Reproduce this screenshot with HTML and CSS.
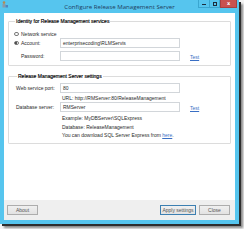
FILE: index.html
```html
<!DOCTYPE html>
<html>
<head>
<meta charset="utf-8">
<link rel="stylesheet" href="styles.css">
</head>
<body>
<div class="win">
  <div class="titlebar">
    <svg class="appicon" width="6" height="7" viewBox="0 0 6 7">
      <rect x="0.5" y="3" width="3" height="3.5" fill="#8a9aa8"/>
      <circle cx="2" cy="1.6" r="1.3" fill="#b58a52"/>
      <rect x="3.5" y="4" width="2.5" height="2.5" fill="#4f86c0"/>
    </svg>
    <div class="title">Configure Release Management Server</div>
    <div class="ctrls">
      <span class="cbtn min"><i></i></span>
      <span class="cbtn max"><i></i></span>
      <span class="cbtn close">x</span>
    </div>
  </div>
  <div class="client">
    <fieldset class="grp g1">
      <legend>Identity for Release Management services</legend>
      <div class="row r-radio"><span class="radio"></span><span>Network service</span></div>
      <div class="row r-field">
        <div class="lbl radio-lbl"><span class="radio on"></span><span>Account:</span></div>
        <div class="input">enterprisecoding\RLMServis</div>
      </div>
      <div class="row r-field r-gap">
        <div class="lbl indent">Password:</div>
        <div class="input"></div>
        <a class="test">Test</a>
      </div>
    </fieldset>
    <fieldset class="grp g2">
      <legend>Release Management Server settings</legend>
      <div class="row r-field">
        <div class="lbl">Web service port:</div>
        <div class="input">80</div>
      </div>
      <div class="row r-note"><span class="note">URL: http://RMServer:80/ReleaseManagement</span></div>
      <div class="row r-field">
        <div class="lbl">Database server:</div>
        <div class="input">RMServer</div>
        <a class="test">Test</a>
      </div>
      <div class="row r-note r-first"><span class="note">Example: MyDBServer\SQLExpress</span></div>
      <div class="row r-note"><span class="note">Database: ReleaseManagement</span></div>
      <div class="row r-note"><span class="note">You can download SQL Server Express from <a class="link">here</a>.</span></div>
    </fieldset>
  </div>
  <div class="footer">
    <span class="btn about">About</span>
    <span class="spacer"></span>
    <span class="btn apply">Apply settings</span>
    <span class="btn closeb">Close</span>
  </div>
</div>
</body>
</html>
```
FILE: styles.css
```css
* { box-sizing: border-box; }
html, body { margin: 0; padding: 0; }
body {
  width: 244px;
  height: 229px;
  background: #f4f4f4;
  font-family: "Liberation Sans", Arial, sans-serif;
  font-size: 5px;
  color: #2a2a2a;
  overflow: hidden;
}
.win {
  width: 239px;
  height: 224px;
  background: #56c5ee;
  padding: 0 4px 4px 4px;
  display: flex;
  flex-direction: column;
  box-shadow: 2px 2px 0 #2e2e2e, 4px 4px 2px #8a8a8a;
}
.titlebar {
  height: 13px;
  display: flex;
  align-items: flex-start;
  position: relative;
}
.appicon {
  margin: 1px 0 0 -2px;
}
.title {
  position: absolute;
  left: 0;
  right: 0;
  top: 3px;
  text-align: center;
  font-family: "Open Sans", "Noto Sans", sans-serif;
  font-size: 6.1px;
  line-height: 7px;
  color: #1f3e5e;
}
.ctrls {
  margin-left: auto;
  margin-right: -2px;
  display: flex;
  height: 8px;
}
.cbtn {
  display: flex;
  align-items: center;
  justify-content: center;
  height: 8px;
  border: 1px solid #3aa6d0;
  border-top: none;
}
.min { width: 11px; border-right: none; }
.max { width: 11px; }
.close {
  width: 17px;
  background: #c9514f;
  border-color: #a84040;
  color: #fff;
  font-family: "DejaVu Sans", sans-serif;
  font-weight: bold;
  font-size: 5px;
  line-height: 7px;
}
.min i { width: 4px; height: 1.5px; background: #1c2c3c; margin-top: 2px; }
.max i { width: 4px; height: 4px; border: 1px solid #1c2c3c; border-top-width: 1.5px; }

.client {
  background: #fff;
  height: 187px;
  padding: 4px 4px 0 4px;
  display: flex;
  flex-direction: column;
}
.grp {
  margin: 0;
  border: 1px solid #dcdcdc;
  border-radius: 1px;
  padding: 5px 0 4px 5px;
  min-width: 0;
}
.grp legend {
  padding: 0 1px;
  margin-left: 1px;
  height: 8px;
  line-height: 8px;
  color: #000;
  -webkit-text-stroke: 0.15px #000;
}
.g2 {
  margin-top: 6px;
  padding: 3px 0 3px 7px;
}
.row {
  display: flex;
  align-items: center;
}
.r-radio { height: 8px; }
.r-field { height: 10px; }
.r-gap { margin-top: 3px; }
.r-note { height: 9px; }
.r-first { margin-top: 2px; height: 8.5px; }
.g2 .r-note + .r-note { height: 8.5px; }
.lbl {
  width: 46px;
  flex: none;
  display: flex;
  align-items: center;
}
.g2 .lbl { width: 44px; }
.indent { padding-left: 7px; }
.radio {
  width: 4.5px;
  height: 4.5px;
  border: 0.6px solid #7a7a7a;
  border-radius: 50%;
  margin-right: 2.5px;
  flex: none;
  display: flex;
  align-items: center;
  justify-content: center;
  background: #fbfbfb;
}
.radio.on::after {
  content: "";
  width: 2px;
  height: 2px;
  border-radius: 50%;
  background: #222;
}
.input {
  width: 120px;
  height: 10px;
  border: 1px solid #d2d6da;
  padding-left: 2px;
  line-height: 8px;
  flex: none;
}
.note { padding-left: 46px; }
.g2 .note { padding-left: 46px; }
.test {
  margin-left: 10px;
  color: #3a6fc4;
  text-decoration: underline;
  margin-top: 1px;
}
.link {
  color: #3a6fc4;
  text-decoration: underline;
}
.footer {
  height: 20px;
  background: #efefef;
  display: flex;
  align-items: center;
  padding: 0 5px 0 3px;
}
.spacer { flex: 1; }
.btn {
  height: 10px;
  border: 1px solid #adadad;
  background: linear-gradient(#f0f0f0, #e2e2e2);
  color: #555;
  display: flex;
  align-items: center;
  justify-content: center;
}
.about { width: 31px; }
.apply { width: 36px; border-color: #3c7fb1; margin-right: 3px; }
.closeb { width: 31px; }
```
